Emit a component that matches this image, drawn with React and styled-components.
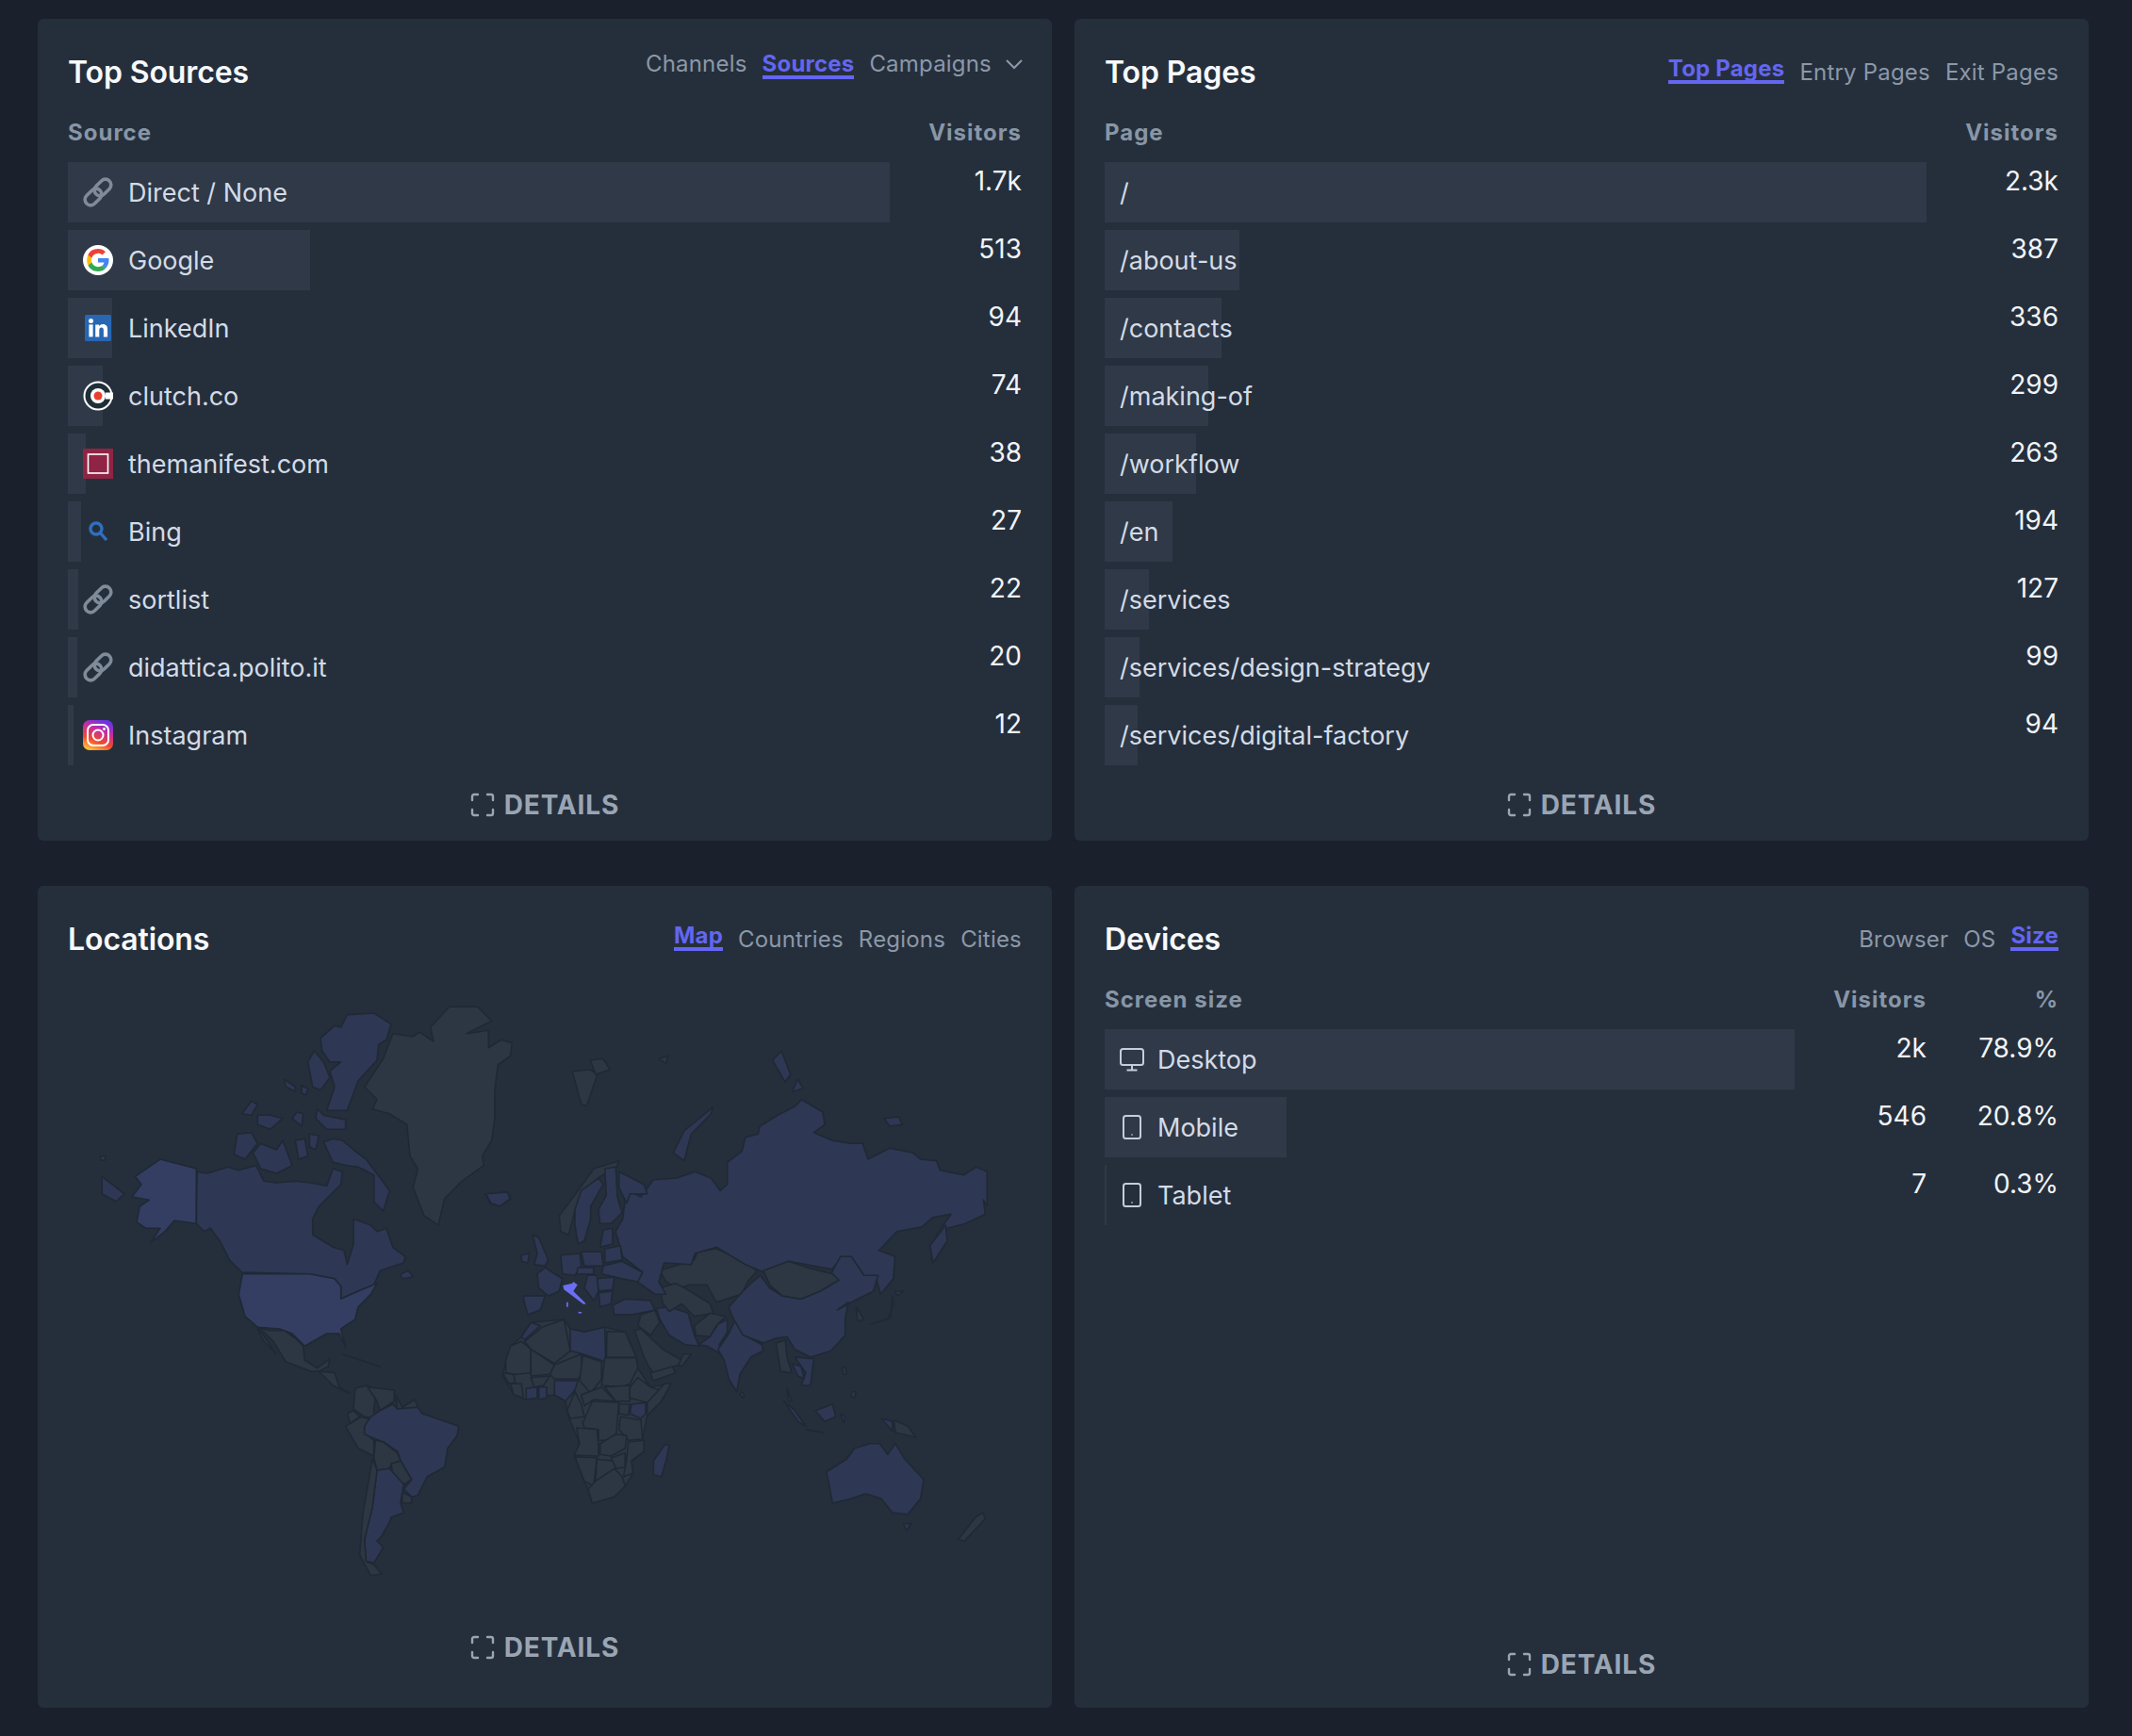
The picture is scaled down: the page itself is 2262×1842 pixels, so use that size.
import styled, { createGlobalStyle } from "styled-components";

const GlobalStyle = createGlobalStyle`
  html, body {
    margin: 0;
    background: #1a202c;
    font-family: Inter, "Noto Sans", sans-serif;
  }
`;

const sources = [
  { name: "Direct / None", value: "1.7k", count: 1740, icon: "link" },
  { name: "Google", value: "513", count: 513, icon: "google" },
  { name: "LinkedIn", value: "94", count: 94, icon: "linkedin" },
  { name: "clutch.co", value: "74", count: 74, icon: "clutch" },
  { name: "themanifest.com", value: "38", count: 38, icon: "manifest" },
  { name: "Bing", value: "27", count: 27, icon: "bing" },
  { name: "sortlist", value: "22", count: 22, icon: "link" },
  { name: "didattica.polito.it", value: "20", count: 20, icon: "link" },
  { name: "Instagram", value: "12", count: 12, icon: "instagram" },
];

const pages = [
  { name: "/", value: "2.3k", count: 2360 },
  { name: "/about-us", value: "387", count: 387 },
  { name: "/contacts", value: "336", count: 336 },
  { name: "/making-of", value: "299", count: 299 },
  { name: "/workflow", value: "263", count: 263 },
  { name: "/en", value: "194", count: 194 },
  { name: "/services", value: "127", count: 127 },
  { name: "/services/design-strategy", value: "99", count: 99 },
  { name: "/services/digital-factory", value: "94", count: 94 },
];

const devices = [
  { name: "Desktop", value: "2k", percent: "78.9%", count: 2070, icon: "desktop" },
  { name: "Mobile", value: "546", percent: "20.8%", count: 546, icon: "mobile" },
  { name: "Tablet", value: "7", percent: "0.3%", count: 7, icon: "mobile" },
];

// map colours
const HI = "#343e63";
const MID = "#2e3753";
const GREY = "#2d3743";
const ITALY = "#6c6ff2";

// [fill, origin, points] traced from crops of the map, origin = [x, y, scaleX, scaleY]
const A = [60, 1040, 3, 3];
const E = [500, 1040, 2.613, 3];
const B = [520, 1220, 3, 3];
const C = [520, 1400, 3, 3];
const D = [760, 1300, 3, 3];
const S = [240, 1340, 3, 3];

const shapes = [
  [HI, A, [250,625,330,570,445,600,445,775,375,765,345,800,300,835,330,790,285,790,255,770,265,720,295,700,240,690,270,650]],
  [MID, A, [145,625,215,680,190,705,145,680]],
  [MID, A, [140,560,155,560,155,573,140,573]],
  [MID, A, [447,610,480,615,545,595,580,605,635,590,660,640,700,645,760,640,810,645,860,655,880,600,910,610,905,650,875,680,835,720,815,760,815,810,880,850,915,860,925,905,945,840,945,760,1000,780,1020,800,1050,790,1070,850,1110,880,1105,900,1030,925,1010,970,960,990,905,1015,905,975,885,950,805,935,590,930,550,890,520,830,490,790,470,800,445,775]],
  [HI, A, [592,935,805,935,885,950,905,975,905,1015,960,990,1020,965,1000,1000,960,1040,950,1080,905,1110,920,1170,900,1125,860,1125,790,1165,750,1125,710,1110,640,1105,600,1070,580,1000]],
  [MID, A, [840,185,885,145,905,150,925,110,1010,105,1065,140,1050,190,1025,205,1020,255,960,320,925,415,860,415,885,340,870,290,905,260,870,260,845,225]],
  [MID, A, [800,260,820,225,850,260,870,310,840,350,815,340]],
  [MID, A, [590,425,620,385,640,395,620,430]],
  [MID, A, [575,490,620,485,640,520,600,570,565,555]],
  [MID, A, [625,550,650,520,700,540,720,510,750,590,700,615,650,600]],
  [MID, A, [640,430,680,430,720,440,680,475,640,460]],
  [MID, A, [765,420,785,425,780,465,750,440]],
  [MID, A, [830,410,850,430,920,445,920,475,860,475,825,440]],
  [MID, A, [805,490,835,495,825,540,805,530]],
  [MID, A, [760,510,790,505,800,560,770,570]],
  [MID, A, [850,515,880,505,910,510,945,540,985,570,1060,670,1040,735,1010,705,1010,620,960,595,925,590,880,580]],
  [MID, A, [725,315,760,340,760,355,730,340]],
  [MID, A, [780,335,800,345,795,365,780,360]],
  [GREY, A, [1190,150,1250,85,1340,85,1385,130,1305,170,1375,160,1375,215,1415,190,1450,200,1445,240,1405,270,1395,350,1395,440,1385,510,1355,560,1360,590,1290,640,1235,695,1215,780,1170,750,1135,660,1150,600,1125,560,1115,460,1060,425,1005,410,1020,380,980,340,1040,250,1070,170,1135,180,1155,165,1200,195]],
  [MID, A, [1365,680,1435,675,1445,695,1410,720,1380,710]],
  [MID, A, [1095,935,1120,925,1135,945,1100,950]],

  // latin america
  [GREY, S, [100,205,135,215,185,215,220,240,245,265,250,310,290,335,330,305,325,330,295,345,270,345,190,315,150,250,120,220]],
  [GREY, S, [100,210,115,225,160,290,120,250]],
  [GREY, S, [295,345,345,350,360,395,395,415,380,410,340,390,310,360]],
  [GREY, S, [370,290,470,325,490,330,400,300]],
  [GREY, S, [410,400,445,390,480,400,470,460,470,495,440,490,405,465]],
  [GREY, S, [450,395,535,405,535,440,490,470,480,440]],
  [GREY, S, [540,420,560,460,600,435,610,460,545,465]],
  [GREY, S, [385,480,405,470,425,490,395,510]],
  [GREY, S, [380,520,430,490,465,500,440,540,470,565,470,615,420,590]],
  [MID, S, [460,490,490,470,530,450,545,465,610,460,625,480,740,520,735,550,705,590,695,650,640,680,610,740,590,745,565,720,590,690,555,630,545,600,500,570,475,560,440,545,440,520]],
  [GREY, S, [475,565,500,570,545,605,555,630,525,640,520,655,480,660,470,620]],
  [GREY, S, [525,640,555,630,590,690,565,705,530,670]],
  [GREY, S, [560,730,590,745,590,765,560,765]],
  [MID, S, [480,660,520,655,565,705,555,765,565,795,525,810,520,825,495,870,480,885,500,905,470,955,445,950,440,880,465,780]],
  [GREY, S, [465,625,480,660,465,780,440,880,445,950,470,960,495,990,460,995,425,930,435,800]],

  // africa
  [GREY, C, [100,55,130,10,235,0,255,30,300,40,365,25,430,40,465,120,470,155,510,215,575,205,545,260,500,305,485,380,490,420,450,450,455,490,430,530,395,565,325,585,312,540,300,515,268,432,285,395,250,310,245,290,240,260,205,240,110,255,70,230,40,180,50,130,65,85]],
  [MID, C, [100,55,130,10,160,20,110,65]],
  [GREY, C, [110,70,165,25,235,0,255,100,205,140,130,95]],
  [GREY, C, [50,130,65,85,100,70,130,95,130,170,80,175,50,170]],
  [GREY, C, [130,95,205,145,190,175,130,180]],
  [GREY, C, [205,145,290,110,295,170,280,190,205,190,190,175]],
  [MID, C, [255,30,300,40,365,25,368,135,295,110,255,100]],
  [GREY, C, [372,38,430,40,465,120,370,120]],
  [GREY, C, [295,115,355,135,355,190,320,235,285,195]],
  [GREY, C, [365,122,465,122,470,155,445,205,420,215,355,210]],
  [MID, C, [205,195,280,195,270,225,240,260,205,240]],
  [GREY, C, [40,170,75,175,80,200,60,205]],
  [GREY, C, [65,205,100,205,105,250,75,240]],
  [MID, C, [115,220,150,215,150,250,115,255]],
  [MID, C, [155,215,180,215,180,250,155,255]],
  [GREY, C, [130,185,190,180,170,210,140,215]],
  [GREY, C, [245,290,270,230,290,270,300,310,255,315]],
  [GREY, C, [290,240,355,215,400,260,330,255,300,275]],
  [GREY, C, [365,215,445,210,445,260,400,260]],
  [GREY, C, [325,260,410,265,405,320,400,385,345,385,345,350,300,345,295,330]],
  [GREY, C, [470,185,510,215,555,230,500,265,445,250,445,215]],
  [GREY, C, [555,205,575,205,545,260,500,305,500,265]],
  [MID, C, [450,270,495,265,495,300,480,315,445,300]],
  [GREY, C, [410,270,445,270,440,305,410,300]],
  [GREY, C, [415,310,480,320,485,380,440,385,410,350]],
  [GREY, C, [275,345,340,350,345,400,345,435,268,432,285,395]],
  [GREY, C, [350,395,400,365,435,370,430,410,385,435,350,430]],
  [GREY, C, [440,390,490,385,490,420,450,450,455,490,425,500,435,440]],
  [GREY, C, [385,440,430,425,430,470,400,475]],
  [GREY, C, [270,437,340,440,330,530,300,515]],
  [GREY, C, [340,445,390,450,400,475,335,515]],
  [GREY, C, [312,540,335,515,395,475,420,500,430,530,395,565,325,585]],
  [MID, C, [555,400,570,400,560,450,545,500,520,495,520,450]],

  // arabia and central asia
  [GREY, C, [460,35,480,30,550,95,610,130,600,145,520,170,505,150,490,120]],
  [GREY, C, [510,170,580,150,590,170,520,195]],
  [GREY, C, [600,145,615,110,640,110,610,150]],
  [MID, B, [530,505,570,500,630,520,650,590,665,625,620,620,570,590,540,540]],
  [GREY, B, [480,525,525,510,540,550,510,590,470,560]],
  [GREY, B, [540,385,650,350,660,325,720,315,790,345,850,385,820,420,800,460,720,485,690,430,630,430,600,445,560,420]],
  [GREY, B, [540,440,590,425,620,440,700,490,710,520,650,530,610,490,570,515,550,490]],
  [GREY, B, [650,560,700,520,750,530,720,560,700,595,655,590]],
  [MID, B, [665,620,700,595,725,555,755,540,755,580,730,620,735,650,690,625]],
  [MID, B, [390,495,430,475,510,480,525,510,450,525,395,525]],
  [MID, C, [725,95,760,45,780,0,810,50,865,80,870,100,830,120,795,175,785,230,760,190,745,130]],
  [GREY, C, [800,230,810,240,805,250,795,240]],

  // russia and the north
  [MID, E, [430,665,470,690,505,635,570,630,620,610,665,630,690,670,710,650,710,580,750,545,760,500,795,490,800,465,850,430,900,400,915,380,975,420,980,460,950,485,1000,510,1050,520,1085,520,1100,570,1160,535,1225,550,1245,570,1290,575,1300,605,1365,620,1400,595,1430,610,1430,720,1420,700,1425,745,1370,775,1320,790,1290,860,1275,890,1290,810,1330,745,1280,755,1250,785,1180,800,1130,860,1175,880,1170,950,1135,1000,1120,940,1075,950,1040,880,1015,900,1000,920,880,895,810,930,760,905,680,850,620,870,610,905,535,900,520,960,540,1000,510,1000,460,960,475,930,420,880,400,800,420,760]],
  [MID, E, [560,550,590,480,670,405,665,425,610,490,590,575]],
  [MID, E, [835,255,860,225,885,300,870,325]],
  [MID, E, [890,355,905,315,920,345]],
  [MID, E, [1145,440,1185,435,1195,460,1160,465]],
  [GREY, E, [280,290,330,285,350,300,320,400,305,395]],
  [GREY, E, [330,255,365,250,385,285,345,300]],
  [GREY, E, [520,250,545,240,540,265]],
  [MID, E, [40,680,100,675,108,695,80,720,55,710]],

  // europe
  [MID, B, [135,270,155,280,185,350,175,370,140,365,150,330]],
  [MID, B, [100,335,125,330,120,360,100,355]],
  [GREY, B, [220,210,280,130,330,60,410,35,400,60,350,85,290,160,270,195,250,270,225,260]],
  [MID, B, [270,190,290,130,345,90,360,110,320,180,320,220,300,290,280,300,270,240]],
  [MID, B, [365,60,400,55,405,150,420,200,385,235,350,235,345,190,370,145]],
  [MID, B, [410,70,490,110,500,140,445,140,435,170,410,120]],
  [MID, B, [150,395,175,375,230,410,220,450,185,465,155,440]],
  [MID, B, [105,465,175,465,160,510,120,525,110,490]],
  [MID, B, [225,335,285,330,290,370,270,400,230,395]],
  [MID, B, [290,325,355,325,360,370,300,370]],
  [MID, B, [360,370,420,355,485,390,470,420,420,410,355,395]],
  [MID, B, [365,315,415,305,420,350,365,360]],
  [MID, B, [360,255,390,250,390,300,350,310]],
  [MID, B, [340,410,395,405,390,445,345,450]],
  [MID, B, [310,400,340,400,345,450,330,480,300,440]],
  [MID, B, [280,375,330,375,330,395,275,395]],
  [MID, B, [345,455,390,450,385,490,350,500]],
  [ITALY, B, [232,432,262,425,265,420,278,430,265,450,305,490,298,492,255,460,235,445]],
  [ITALY, B, [243,485,248,485,248,500,243,500]],
  [ITALY, B, [280,515,292,517,290,521,281,520]],

  // east asia
  [MID, D, [140,160,170,200,210,225,270,235,330,210,390,175,365,155,395,100,430,100,470,160,515,160,500,210,440,240,385,270,420,245,410,300,410,350,365,400,300,420,250,395,225,355,190,360,150,375,85,350,50,290,40,260,85,210,110,185]],
  [GREY, D, [150,145,230,115,290,135,370,155,390,175,330,210,270,235,210,225,170,190]],
  [GREY, D, [190,375,220,365,225,420,240,470,205,465]],
  [MID, D, [240,440,270,450,280,490,260,480]],
  [MID, D, [250,420,310,425,300,510,270,510,285,470]],
  [GREY, D, [225,520,240,560,230,560]],
  [MID, D, [215,560,250,590,285,640,260,625]],
  [MID, D, [315,590,370,570,380,610,345,625]],
  [MID, D, [285,650,340,660,300,655]],
  [GREY, D, [400,455,410,450,415,475,405,475]],
  [GREY, D, [430,530,445,530,440,550,430,545]],
  [MID, D, [395,600,410,610,405,630]],
  [MID, D, [525,615,560,625,560,655]],
  [GREY, D, [565,620,610,640,635,675,570,660]],
  [MID, D, [350,785,415,745,440,710,490,695,520,695,545,730,570,695,600,745,660,810,650,870,610,920,560,915,525,870,475,855,430,870,370,885,360,830]],
  [MID, D, [595,950,620,950,605,972]],
  [GREY, D, [770,1000,825,930,850,915,855,935,790,1005]],
  [MID, D, [490,315,545,300,565,250,560,225,555,295]],
  [MID, D, [570,210,595,210,575,225]],
  [GREY, D, [445,260,470,300,450,305]],
  [MID, D, [680,65,730,0,735,50,690,120]],
];

const toPoints = ([ox, oy, sx, sy], pts) => {
  const out = [];
  for (let i = 0; i < pts.length; i += 2) {
    out.push(`${(ox + pts[i] / sx).toFixed(1)},${(oy + pts[i + 1] / sy).toFixed(1)}`);
  }
  return out.join(" ");
};

const Page = styled.div`
  display: grid;
  grid-template-columns: 1076px 1076px;
  grid-auto-rows: 872px;
  column-gap: 24px;
  row-gap: 48px;
  padding: 20px 46px 30px 40px;
  width: 2262px;
  height: 1842px;
  box-sizing: border-box;
  background: #1a202c;
`;

const Card = styled.section`
  display: flex;
  flex-direction: column;
  box-sizing: border-box;
  padding: 36px 32px 0;
  background: #252f3c;
  border-radius: 6px;
`;

const CardHeader = styled.header`
  display: flex;
  justify-content: space-between;
  align-items: flex-start;
  height: 40px;
`;

const Title = styled.h3`
  margin: 0;
  font-size: 32px;
  line-height: 42px;
  font-weight: 600;
  letter-spacing: -0.1px;
  color: #f7f9fb;
`;

const Tabs = styled.nav`
  display: flex;
  align-items: ${(p) => (p.$raised ? "flex-start" : "flex-end")};
  gap: 16px;
  height: 33px;
`;

const Tab = styled.span`
  font-size: 24px;
  line-height: 24px;
  letter-spacing: 0.2px;
  font-weight: ${(p) => (p.$active ? 700 : 400)};
  color: ${(p) => (p.$active ? "#6366f1" : "#8c98a8")};
  border-bottom: ${(p) => (p.$active ? "4px solid #6366f1" : "0")};
`;

const Chevron = styled.svg`
  width: 20px;
  height: 20px;
  margin: 2px -2px 0 -2px;
  fill: none;
  stroke: #8c98a8;
  stroke-width: 2;
`;

const HeadRow = styled.div`
  display: flex;
  margin-top: 29px;
  margin-bottom: 15px;
  font-size: 24px;
  line-height: 32px;
  font-weight: 700;
  letter-spacing: 1px;
  color: #8896a6;
`;

const HeadLabel = styled.div`
  flex: 1;
`;

const HeadValue = styled.div`
  width: 140px;
  text-align: right;
`;

const Rows = styled.div`
  display: flex;
  flex-direction: column;
  gap: 8px;
`;

const Row = styled.div`
  display: flex;
  height: 64px;
`;

const Track = styled.div`
  position: relative;
  flex: 1;
  min-width: 0;
`;

const Bar = styled.div`
  position: absolute;
  left: 0;
  top: 0;
  bottom: 0;
  background: #2f3947;
`;

const RowLabel = styled.div`
  position: relative;
  display: flex;
  align-items: center;
  gap: ${(p) => p.$gap || 16}px;
  height: 100%;
  padding-left: 16px;
  font-size: 27px;
  color: #d3dbe6;
`;

const Value = styled.div`
  width: 140px;
  text-align: right;
  font-size: 28px;
  line-height: 40px;
  color: #f1f4f8;
`;

const Footer = styled.div`
  display: flex;
  justify-content: center;
  align-items: center;
  gap: 10px;
  margin-top: auto;
  padding-bottom: ${(p) => p.$bottom}px;
  font-size: 28px;
  line-height: 32px;
  font-weight: 700;
  letter-spacing: 0.9px;
  color: #9aa5b4;
`;

const Icon = styled.svg`
  flex: none;
  width: 32px;
  height: 32px;
`;

const DeviceIcon = styled.svg`
  flex: none;
  width: 26px;
  height: 26px;
  fill: none;
  stroke: #c5ced9;
  stroke-width: 2;
`;

const ExpandIcon = styled.svg`
  flex: none;
  width: 26px;
  height: 26px;
  fill: none;
  stroke: #9aa5b4;
  stroke-width: 2.4;
  stroke-linecap: round;
`;

const WorldMap = styled.svg`
  display: block;
  width: 1012px;
  height: 714px;
`;

const SourceIcon = ({ type }) => {
  if (type === "link") {
    return (
      <Icon viewBox="0 0 32 32" fill="none" stroke="#7f8b98" strokeWidth="3.600">
        <rect x="11" y="5" width="20" height="12" rx="6" transform="rotate(-45 21 11)" />
        <rect x="1" y="15" width="20" height="12" rx="6" transform="rotate(-45 11 21)" />
      </Icon>
    );
  }
  if (type === "google") {
    return (
      <Icon viewBox="0 0 32 32">
        <circle cx="16" cy="16" r="16" fill="#fff" />
        <g transform="translate(16 16) scale(1.2) translate(-16 -16)">
          <path d="M25.600 16.300c0-.8-.1-1.400-.2-2H16v3.700h5.400c-.2 1.200-.9 2.300-2 3l3.100 2.400c1.900-1.700 3.100-4.200 3.100-7.100z" fill="#4285f4" />
          <path d="M16 26c2.700 0 5-.9 6.600-2.500l-3.200-2.500c-.9.600-2 1-3.400 1-2.600 0-4.800-1.800-5.600-4.100l-3.200 2.500C8.200 23.700 11.800 26 16 26z" fill="#34a853" />
          <path d="M10.400 17.900a6 6 0 0 1 0-3.800l-3.200-2.500a10 10 0 0 0 0 8.800z" fill="#fbbc05" />
          <path d="M16 10c1.500 0 2.800.5 3.800 1.500l2.800-2.800C20.900 7 18.700 6 16 6c-4.200 0-7.800 2.300-8.800 5.600l3.200 2.500C11.200 11.800 13.400 10 16 10z" fill="#ea4335" />
        </g>
      </Icon>
    );
  }
  if (type === "linkedin") {
    return (
      <Icon viewBox="0 0 32 32">
        <rect x="2" y="2" width="28" height="28" rx="1.500" fill="#2867b2" />
        <circle cx="8.500" cy="8.500" r="2.500" fill="#fff" />
        <rect x="6.400" y="12.400" width="4.200" height="13" fill="#fff" />
        <path d="M13.200 12.400h4v1.900c.8-1.300 2.200-2.200 4-2.200 3.500 0 4.900 2.200 4.900 5.600v7.700h-4.200v-6.900c0-1.800-.6-2.900-2.200-2.900-1.700 0-2.400 1.200-2.400 2.900v6.900h-4.100z" fill="#fff" />
      </Icon>
    );
  }
  if (type === "clutch") {
    return (
      <Icon viewBox="0 0 32 32">
        <circle cx="16" cy="16" r="15.500" fill="#fff" />
        <circle cx="16" cy="16" r="13.500" fill="#1f2f38" />
        <circle cx="16" cy="16" r="8" fill="#fff" />
        <circle cx="16" cy="16" r="4.500" fill="#e8402f" />
        <rect x="24" y="12.500" width="8" height="7" fill="#fff" />
      </Icon>
    );
  }
  if (type === "manifest") {
    return (
      <Icon viewBox="0 0 32 32">
        <rect width="32" height="32" fill="#8f2445" />
        <rect x="5.500" y="6" width="21" height="20" fill="none" stroke="#fff" strokeWidth="1.600" />
      </Icon>
    );
  }
  if (type === "bing") {
    return (
      <Icon viewBox="0 0 32 32" fill="none" stroke="#2f6fc0" strokeWidth="3.400">
        <circle cx="14" cy="13" r="6" />
        <path d="M18.500 17.500 L25 25" />
      </Icon>
    );
  }
  return (
    <Icon viewBox="0 0 32 32">
      <defs>
        <linearGradient id="insta" x1="0.200" y1="1" x2="0.600" y2="0">
          <stop offset="0" stopColor="#fdc83a" />
          <stop offset="0.350" stopColor="#f0492f" />
          <stop offset="0.700" stopColor="#c42ea0" />
          <stop offset="1" stopColor="#6a35e0" />
        </linearGradient>
      </defs>
      <rect width="32" height="32" rx="7" fill="url(#insta)" />
      <rect x="5" y="5" width="22" height="22" rx="6" fill="none" stroke="#fff" strokeWidth="2" />
      <circle cx="16" cy="16" r="5.500" fill="none" stroke="#fff" strokeWidth="2" />
      <circle cx="22.500" cy="9.500" r="1.400" fill="#fff" />
    </Icon>
  );
};

const ScreenIcon = ({ type }) =>
  type === "desktop" ? (
    <DeviceIcon viewBox="0 0 26 26">
      <rect x="1" y="2" width="24" height="17" rx="2.500" />
      <path d="M13 19v5M7.500 24.500h11" />
    </DeviceIcon>
  ) : (
    <DeviceIcon viewBox="0 0 26 26">
      <rect x="4" y="1" width="18" height="24" rx="2.500" />
      <path d="M12.500 21h1" />
    </DeviceIcon>
  );

const Details = ({ bottom }) => (
  <Footer $bottom={bottom}>
    <ExpandIcon viewBox="0 0 26 26">
      <path d="M2 8V4a2 2 0 0 1 2-2h4M18 2h4a2 2 0 0 1 2 2v4M24 18v4a2 2 0 0 1-2 2h-4M8 24H4a2 2 0 0 1-2-2v-4" />
    </ExpandIcon>
    DETAILS
  </Footer>
);

const BarRow = ({ item, max, width, gap, children, extra }) => (
  <Row>
    <Track>
      <Bar style={{ width: (width * item.count) / max }} />
      <RowLabel $gap={gap}>
        {children}
        {item.name}
      </RowLabel>
    </Track>
    <Value>{item.value}</Value>
    {extra && <Value>{extra}</Value>}
  </Row>
);

const App = () => (
  <Page>
    <GlobalStyle />
    <Card>
      <CardHeader>
        <Title>Top Sources</Title>
        <Tabs $raised>
          <Tab>Channels</Tab>
          <Tab $active>Sources</Tab>
          <Tab>Campaigns</Tab>
          <Chevron viewBox="0 0 20 20">
            <path d="M2 6l8 8 8-8" />
          </Chevron>
        </Tabs>
      </CardHeader>
      <HeadRow>
        <HeadLabel>Source</HeadLabel>
        <HeadValue>Visitors</HeadValue>
      </HeadRow>
      <Rows>
        {sources.map((item) => (
          <BarRow key={item.name} item={item} max={1740} width={872}>
            <SourceIcon type={item.icon} />
          </BarRow>
        ))}
      </Rows>
      <Details bottom={22} />
    </Card>

    <Card>
      <CardHeader>
        <Title>Top Pages</Title>
        <Tabs>
          <Tab $active>Top Pages</Tab>
          <Tab>Entry Pages</Tab>
          <Tab>Exit Pages</Tab>
        </Tabs>
      </CardHeader>
      <HeadRow>
        <HeadLabel>Page</HeadLabel>
        <HeadValue>Visitors</HeadValue>
      </HeadRow>
      <Rows>
        {pages.map((item) => (
          <BarRow key={item.name} item={item} max={2360} width={872} />
        ))}
      </Rows>
      <Details bottom={22} />
    </Card>

    <Card>
      <CardHeader>
        <Title>Locations</Title>
        <Tabs>
          <Tab $active>Map</Tab>
          <Tab>Countries</Tab>
          <Tab>Regions</Tab>
          <Tab>Cities</Tab>
        </Tabs>
      </CardHeader>
      <WorldMap viewBox="72 1016 1012 714">
        {shapes.map(([fill, origin, pts], i) => (
          <polygon
            key={i}
            points={toPoints(origin, pts)}
            fill={fill}
            stroke={fill === ITALY ? "none" : "#1f2935"}
            strokeWidth="1.600"
            strokeLinejoin="round"
          />
        ))}
      </WorldMap>
      <Details bottom={48} />
    </Card>

    <Card>
      <CardHeader>
        <Title>Devices</Title>
        <Tabs>
          <Tab>Browser</Tab>
          <Tab>OS</Tab>
          <Tab $active>Size</Tab>
        </Tabs>
      </CardHeader>
      <HeadRow>
        <HeadLabel>Screen size</HeadLabel>
        <HeadValue>Visitors</HeadValue>
        <HeadValue>%</HeadValue>
      </HeadRow>
      <Rows>
        {devices.map((item) => (
          <BarRow key={item.name} item={item} max={2070} width={732} gap={14} extra={item.percent}>
            <ScreenIcon type={item.icon} />
          </BarRow>
        ))}
      </Rows>
      <Details bottom={30} />
    </Card>
  </Page>
);

export default App;
